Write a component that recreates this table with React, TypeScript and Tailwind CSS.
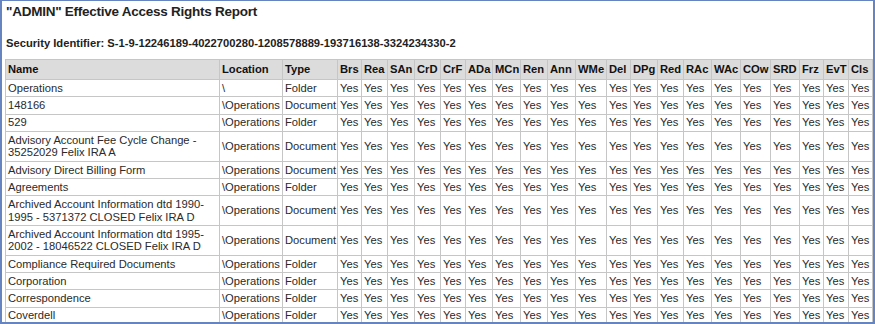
import {FC, JSX} from "react";

const COLUMNS: {label: string; width: number}[] = [
  {label: "Name", width: 214},
  {label: "Location", width: 63},
  {label: "Type", width: 55},
  {label: "Brs", width: 24},
  {label: "Rea", width: 26},
  {label: "SAn", width: 27},
  {label: "CrD", width: 26},
  {label: "CrF", width: 25},
  {label: "ADa", width: 27},
  {label: "MCn", width: 28},
  {label: "Ren", width: 27},
  {label: "Ann", width: 28},
  {label: "WMe", width: 31},
  {label: "Del", width: 24},
  {label: "DPg", width: 27},
  {label: "Red", width: 26},
  {label: "RAc", width: 28},
  {label: "WAc", width: 29},
  {label: "COw", width: 30},
  {label: "SRD", width: 29},
  {label: "Frz", width: 24},
  {label: "EvT", width: 25},
  {label: "Cls", width: 24},
];

const ROWS: {name: string; location: string; type: string}[] = [
  {name: "Operations", location: "\\", type: "Folder"},
  {name: "148166", location: "\\Operations", type: "Document"},
  {name: "529", location: "\\Operations", type: "Folder"},
  {name: "Advisory Account Fee Cycle Change - 35252029 Felix IRA A", location: "\\Operations", type: "Document"},
  {name: "Advisory Direct Billing Form", location: "\\Operations", type: "Document"},
  {name: "Agreements", location: "\\Operations", type: "Folder"},
  {name: "Archived Account Information dtd 1990-1995 - 5371372 CLOSED Felix IRA D", location: "\\Operations", type: "Document"},
  {name: "Archived Account Information dtd 1995-2002 - 18046522 CLOSED Felix IRA D", location: "\\Operations", type: "Document"},
  {name: "Compliance Required Documents", location: "\\Operations", type: "Folder"},
  {name: "Corporation", location: "\\Operations", type: "Folder"},
  {name: "Correspondence", location: "\\Operations", type: "Folder"},
  {name: "Coverdell", location: "\\Operations", type: "Folder"},
];

const RIGHTS = COLUMNS.slice(3);

const cell = "border border-[#c6c6c6] px-[2px] py-[1.9px] align-middle text-left whitespace-normal overflow-hidden";

const App: FC = (): JSX.Element => {
  return (
    <div
      className="w-[875px] h-[324px] overflow-hidden bg-white border-l-2 border-t border-r-2 border-b-2 border-[#6584c0] text-[#222]"
      style={{fontFamily: '"Liberation Sans", Arial, sans-serif'}}
    >
      <div className="pl-[3px]">
        <h1 className="font-bold text-[13.5px] leading-[16px] tracking-[-0.25px] pt-[2.5px] pl-[1px]">"ADMIN" Effective Access Rights Report</h1>
        <p className="font-bold text-[11.2px] leading-[14px] mt-[16.5px] pl-[1px]">
          Security Identifier: S-1-9-12246189-4022700280-1208578889-193716138-3324234330-2
        </p>
        <table className="mt-[9px] border-collapse table-fixed text-[11.2px] leading-[12.5px]" style={{width: 867}}>
          <colgroup>
            {COLUMNS.map((c) => (
              <col key={c.label} style={{width: c.width}} />
            ))}
          </colgroup>
          <thead>
            <tr className="bg-[#dcdcdc] h-[20px]">
              {COLUMNS.map((c) => (
                <th key={c.label} className={`${cell} font-bold text-[#111]`}>
                  {c.label}
                </th>
              ))}
            </tr>
          </thead>
          <tbody className="text-[#2a2a2a]">
            {ROWS.map((row) => (
              <tr key={row.name}>
                <td className={cell}>{row.name}</td>
                <td className={`${cell} whitespace-nowrap`}>{row.location}</td>
                <td className={`${cell} whitespace-nowrap`}>{row.type}</td>
                {RIGHTS.map((r) => (
                  <td key={r.label} className={`${cell} whitespace-nowrap`}>Yes</td>
                ))}
              </tr>
            ))}
          </tbody>
        </table>
      </div>
    </div>
  );
};

export default App;
